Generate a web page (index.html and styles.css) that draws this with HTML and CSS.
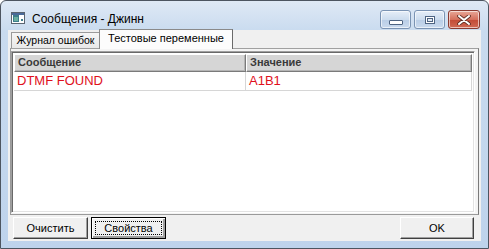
FILE: index.html
```html
<!DOCTYPE html>
<html lang="ru">

<head>
    <meta charset="UTF-8">
    <title>Сообщения - Джинн</title>
    <link rel="stylesheet" href="styles.css">
</head>

<body>
    <div class="window">
        <div class="titlebar">
            <svg class="app-icon" width="14" height="12" viewBox="0 0 14 12">
                <rect x="0.5" y="0.5" width="13" height="11" fill="#fff" stroke="#5a6470" />
                <rect x="1" y="1" width="12" height="2" fill="#4a6a9a" />
                <rect x="2" y="3" width="6" height="7" fill="#3d7d8c" />
                <rect x="3" y="5" width="4" height="4" fill="#6ab0a0" />
                <rect x="10" y="7" width="2" height="2" fill="#3d7d8c" />
            </svg>
            <span class="title">Сообщения - Джинн</span>
            <div class="controls">
                <div class="ctl"><span class="glyph-min"></span></div>
                <div class="ctl"><span class="glyph-max"></span></div>
                <div class="ctl close">
                    <svg width="14" height="10" viewBox="0 0 14 10">
                        <path d="M2 1 L12 9 M12 1 L2 9" stroke="#5a2a20" stroke-width="3.6" stroke-linecap="round" />
                        <path d="M2 1 L12 9 M12 1 L2 9" stroke="#fff" stroke-width="2" stroke-linecap="round" />
                    </svg>
                </div>
            </div>
        </div>

        <div class="client">
            <div class="tabs">
                <div class="tab">Журнал ошибок</div>
                <div class="tab active">Тестовые переменные</div>
            </div>

            <div class="tab-page">
                <div class="listview">
                    <div class="lv-head">
                        <div class="col col-msg">Сообщение</div>
                        <div class="col col-val">Значение</div>
                    </div>
                    <div class="lv-row">
                        <div class="cell col-msg">DTMF FOUND</div>
                        <div class="cell col-val">A1B1</div>
                    </div>
                </div>
            </div>

            <div class="actions">
                <button class="btn">Очистить</button>
                <button class="btn default"><span class="focus">Свойства</span></button>
                <button class="btn ok">OK</button>
            </div>
        </div>
    </div>
</body>

</html>
```

FILE: styles.css
```css
/* dialog window, win7 basic look */
body {
    margin: 0;
    padding: 0;
    font-family: "Liberation Sans", Arial, sans-serif;
    background-color: #ffffff;
}

.window {
    width: 489px;
    height: 249px;
    box-sizing: border-box;
    border: 1px solid #4d5560;
    border-radius: 6px 6px 0 0;
    background: linear-gradient(#dfe9f5, #c9dbef 30px, #bed3ec);
    display: flex;
    flex-direction: column;
}

.titlebar {
    height: 29px;
    display: flex;
    align-items: flex-start;
    padding-left: 10px;
    padding-right: 8px;
}

.app-icon {
    margin-top: 11px;
    margin-right: 7px;
}

.title {
    margin-top: 11px;
    font-size: 12px;
    color: #000;
}

.controls {
    margin-left: auto;
    margin-top: 9px;
    display: flex;
    gap: 3px;
}

.ctl {
    width: 29px;
    height: 17px;
    border: 1px solid #7a93b3;
    border-radius: 3px;
    background: linear-gradient(#e6eef8, #ccdcee 50%, #b9cde6 51%, #c9daee);
    box-shadow: inset 0 0 0 1px rgba(255, 255, 255, 0.6);
    display: flex;
    align-items: center;
    justify-content: center;
}

.ctl.close {
    width: 30px;
    border-color: #8a3a30;
    background: linear-gradient(#e8a898, #d5705c 50%, #c24a36 51%, #d06a55);
}

.glyph-min {
    width: 12px;
    height: 3px;
    margin-top: 5px;
    background: #fff;
    border: 1px solid #4e6482;
    border-radius: 1px;
}

.glyph-max {
    width: 8px;
    height: 6px;
    border: 1px solid #4e6482;
    box-shadow: inset 0 0 0 1px #fff, inset 0 0 0 2px #4e6482;
    background: #dfe8f3;
}

.client {
    flex: 1;
    margin: 0 7px 7px 7px;
    background-color: #f0f0f0;
    padding: 0 2px;
    display: flex;
    flex-direction: column;
}

/* tabs */
.tabs {
    height: 18px;
    display: flex;
    align-items: flex-end;
    font-size: 10.5px;
    color: #000;
}

.tab {
    width: 87px;
    height: 15px;
    margin-left: 1px;
    border: 1px solid #9a9a9a;
    border-bottom: none;
    background: linear-gradient(#f6f6f6, #e8e8e8);
    box-sizing: content-box;
    text-align: center;
    line-height: 15px;
    white-space: nowrap;
}

.tab.active {
    width: 132px;
    height: 19px;
    margin-left: -1px;
    margin-bottom: -1px;
    background: #fcfcfc;
    border-color: #8a8a8a;
    border-right-color: #6a6a6a;
    font-size: 11px;
    line-height: 16px;
    position: relative;
    z-index: 1;
}

.tab-page {
    height: 163px;
    border: 1px solid #9a9a9a;
    border-right-color: #7a7a7a;
    border-top-color: #a0a0a0;
    padding: 2px 3px 0 0;
    background-color: #f4f4f4;
}

/* list */
.listview {
    height: 162px;
    box-sizing: border-box;
    border-top: 1px solid #a0a0a0;
    border-left: 1px solid #a0a0a0;
    border-right: 1px solid #ffffff;
    border-bottom: 1px solid #ffffff;
    box-shadow: inset 1px 1px 0 #696969, inset -1px -1px 0 #e3e3e3;
    background-color: #ffffff;
    padding: 2px 2px 2px 2px;
}

.lv-head {
    display: flex;
    height: 18px;
    font-size: 11px;
    font-weight: bold;
    color: #3a3a3a;
}

.lv-head .col {
    box-sizing: border-box;
    background-color: #d6d6d6;
    border-top: 1px solid #ffffff;
    border-left: 1px solid #ffffff;
    border-right: 1px solid #7a7a7a;
    border-bottom: 1px solid #7a7a7a;
    box-shadow: inset -1px -1px 0 #b4b4b4;
    padding-left: 3px;
    line-height: 15px;
}

.col-msg {
    width: 232px;
}

.col-val {
    flex: 1;
}

.lv-row {
    display: flex;
    height: 19px;
}

.lv-row .cell {
    box-sizing: border-box;
    border-right: 1px solid #d6d6d6;
    border-bottom: 1px solid #d6d6d6;
    padding-left: 3px;
    font-size: 13px;
    line-height: 18px;
    color: #e0101c;
}

/* buttons */
.actions {
    display: flex;
    gap: 3px;
    margin-top: 2px;
    padding: 0 5px 0 3px;
}

.btn {
    width: 75px;
    height: 22px;
    margin: 0;
    padding: 0;
    font-family: "Liberation Sans", Arial, sans-serif;
    font-size: 11px;
    color: #000;
    background-color: #f0f0f0;
    border-top: 1px solid #ffffff;
    border-left: 1px solid #ffffff;
    border-right: 1px solid #404040;
    border-bottom: 1px solid #404040;
    box-shadow: inset -1px -1px 0 #a0a0a0;
}

.btn.default {
    border: 1px solid #000;
    box-shadow: inset 1px 1px 0 #fff, inset -2px -2px 0 #a0a0a0;
}

.btn .focus {
    display: block;
    margin: 3px;
    border: 1px dotted #000;
    line-height: 12px;
}

.btn.ok {
    width: 74px;
    margin-left: auto;
}
```
